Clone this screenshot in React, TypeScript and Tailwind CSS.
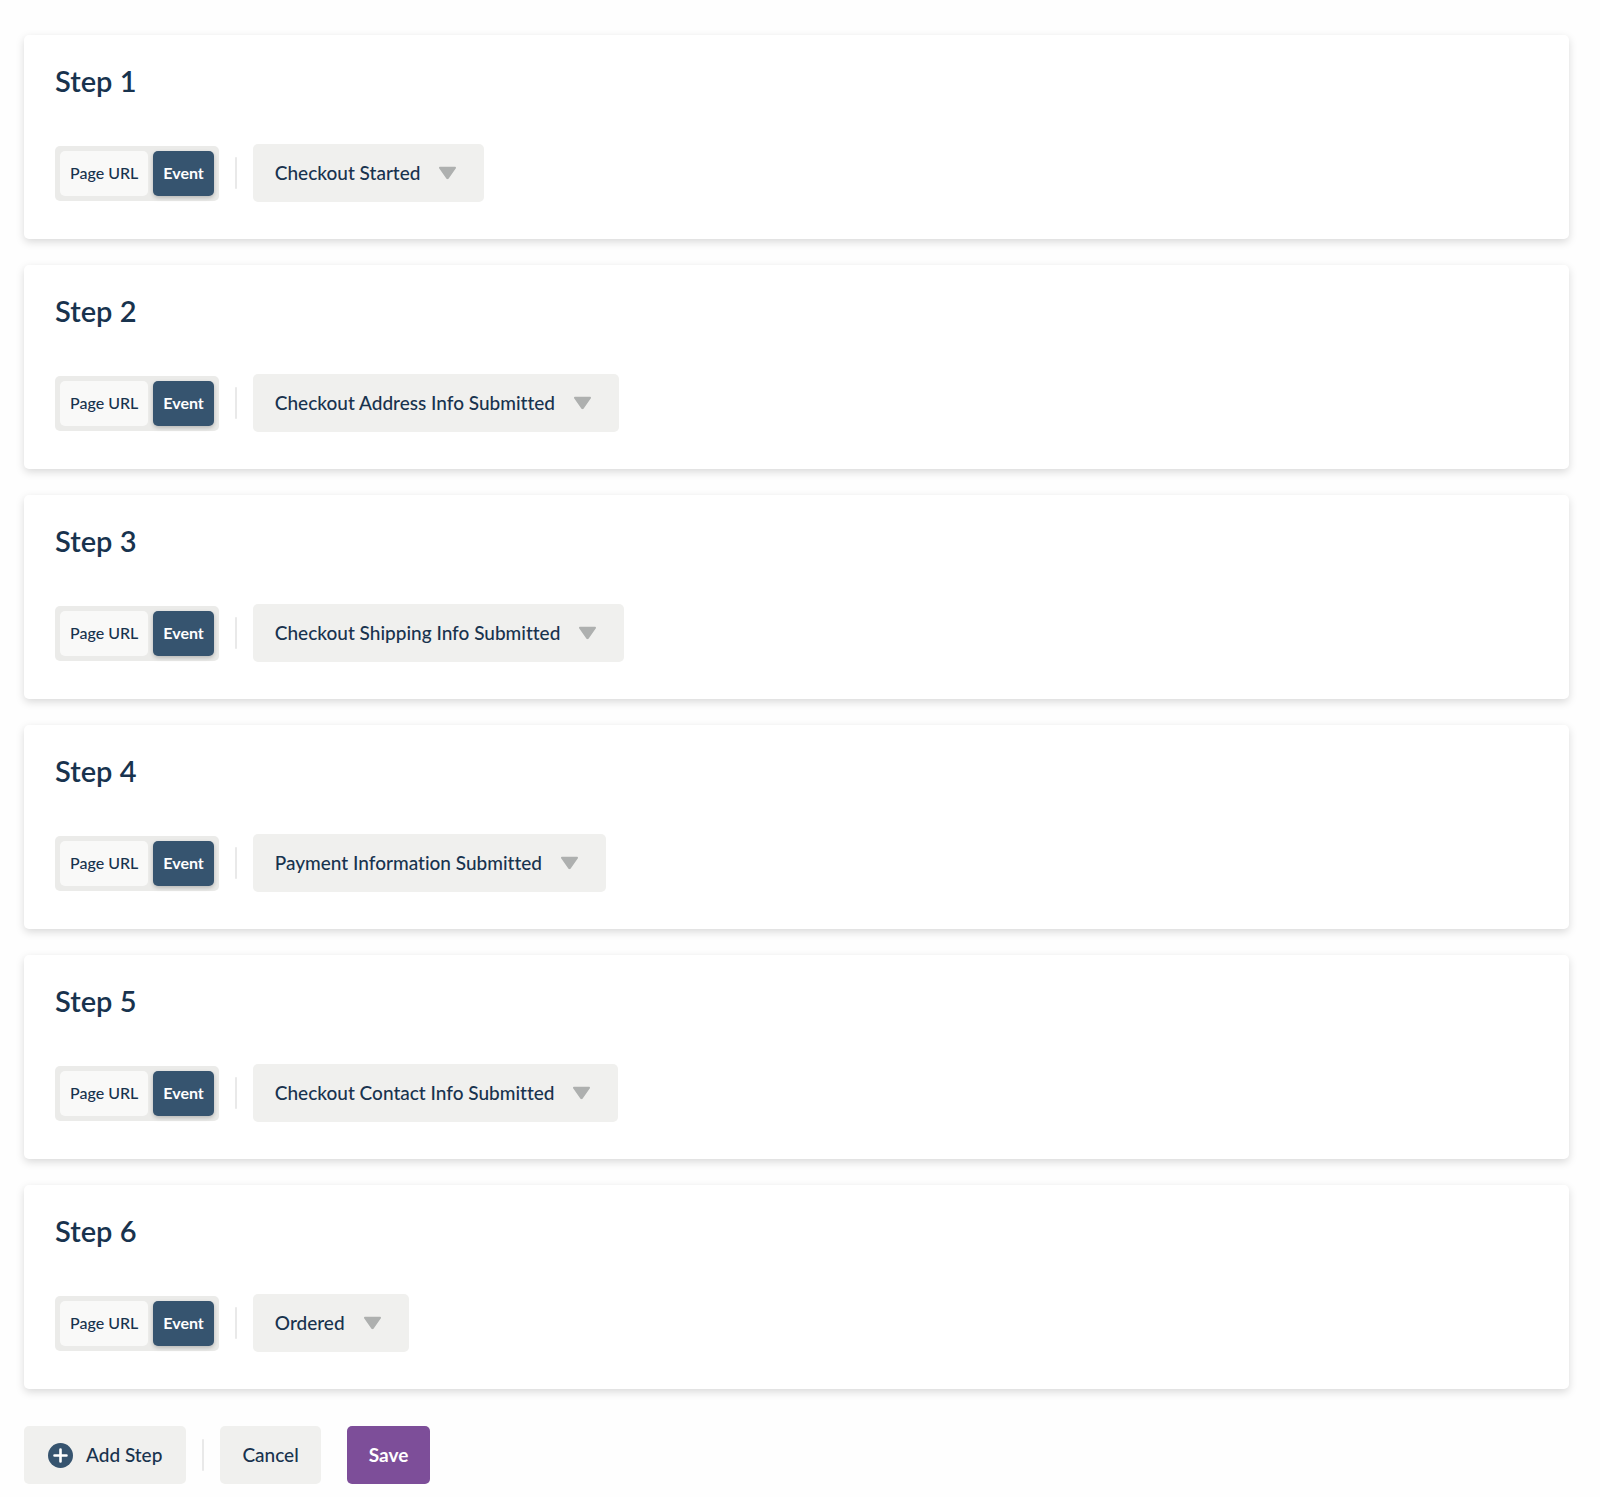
import React, { useState } from 'react';

type StepMode = 'url' | 'event';

interface Step {
  id: number;
  mode: StepMode;
  event: string;
}

const EVENTS = [
  'Checkout Started',
  'Checkout Address Info Submitted',
  'Checkout Shipping Info Submitted',
  'Payment Information Submitted',
  'Checkout Contact Info Submitted',
  'Ordered',
];

const Divider: React.FC = () => <div className="h-8 w-0.5 mx-4 shrink-0 rounded-full bg-[#e9e9e9]" />;

const ModeToggle: React.FC<{ mode: StepMode; onChange: (mode: StepMode) => void }> = ({ mode, onChange }) => {
  const modes: { value: StepMode; label: string }[] = [
    { value: 'url', label: 'Page URL' },
    { value: 'event', label: 'Event' },
  ];

  return (
    <div className="flex gap-[5px] p-[5px] rounded-[5px] bg-[#ebebe9]">
      {modes.map(({ value, label }) => (
        <button
          key={value}
          type="button"
          aria-pressed={mode === value}
          onClick={() => onChange(value)}
          className={`h-[45px] px-[10px] rounded-[5px] text-[16px] cursor-pointer ${
            mode === value
              ? 'bg-[#36546f] text-white font-bold shadow-[0_2px_4px_rgba(0,0,0,0.22)]'
              : 'bg-[#f9f9f8] text-[#18334e] font-medium'
          }`}
        >
          {label}
        </button>
      ))}
    </div>
  );
};

const EventSelect: React.FC<{ label: string; value: string; onChange: (value: string) => void }> = ({ label, value, onChange }) => (
  <div className="relative">
    <select
      aria-label={label}
      value={value}
      onChange={(e) => onChange(e.target.value)}
      className="field-sizing-content appearance-none h-[58px] pl-[22px] pr-16 rounded-[5px] bg-[#f0f0ee] text-[19px] font-medium text-[#18334e] cursor-pointer [font-variant-ligatures:none]"
    >
      {EVENTS.map((event) => (
        <option key={event} value={event}>{event}</option>
      ))}
    </select>
    <svg
      className="absolute right-7 top-1/2 -translate-y-1/2 pointer-events-none"
      width="17"
      height="13"
      viewBox="0 0 17 13"
      fill="#aeb0af"
      aria-hidden="true"
    >
      <path d="M1.4 0h14.2c1.2 0 1.8 1.2 1.1 2.1L9.7 12c-.6.9-1.8.9-2.4 0L.3 2.1C-.4 1.2.2 0 1.4 0Z" />
    </svg>
  </div>
);

export default function App() {
  const [steps, setSteps] = useState<Step[]>(
    EVENTS.map((event, i) => ({ id: i + 1, mode: 'event', event }))
  );

  const updateStep = (id: number, patch: Partial<Step>) => {
    setSteps(steps.map((step) => (step.id === id ? { ...step, ...patch } : step)));
  };

  const addStep = () => {
    setSteps([...steps, { id: steps.length + 1, mode: 'event', event: EVENTS[0] }]);
  };

  return (
    <main className="min-h-screen bg-[#fefefe] pl-6 pr-[31px] pt-[35px] pb-3 font-[Lato,sans-serif] text-[#18334e]">
      <div className="flex flex-col gap-[26px]">
        {steps.map((step) => (
          <section
            key={step.id}
            className="rounded-[5px] bg-white px-[31px] pt-7 pb-[37px] shadow-[0_3px_8px_rgba(0,0,0,0.15)]"
          >
            <h2 className="text-[29px] leading-9 font-semibold">Step {step.id}</h2>
            <div className="flex items-center mt-[45px]">
              <ModeToggle mode={step.mode} onChange={(mode) => updateStep(step.id, { mode })} />
              <Divider />
              <EventSelect
                label={`Step ${step.id} event`}
                value={step.event}
                onChange={(event) => updateStep(step.id, { event })}
              />
            </div>
          </section>
        ))}
      </div>

      {/* Footer actions */}
      <div className="flex items-center mt-[37px] text-[19px]">
        <button
          type="button"
          onClick={addStep}
          className="flex items-center gap-[13px] h-[58px] px-6 rounded-[5px] bg-[#f0f0ee] font-medium cursor-pointer"
        >
          <svg width="25" height="25" viewBox="0 0 25 25" aria-hidden="true">
            <circle cx="12.5" cy="12.5" r="12.5" fill="#36546f" />
            <path d="M12.5 6.5v12M6.5 12.5h12" stroke="#fff" strokeWidth="2.6" strokeLinecap="round" />
          </svg>
          Add Step
        </button>
        <Divider />
        <button type="button" className="h-[58px] px-[22px] rounded-[5px] bg-[#f0f0ee] font-medium cursor-pointer">
          Cancel
        </button>
        <button type="button" className="h-[58px] px-[22px] ml-[26px] rounded-[5px] bg-[#7d4e99] text-white font-bold cursor-pointer">
          Save
        </button>
      </div>
    </main>
  );
}
